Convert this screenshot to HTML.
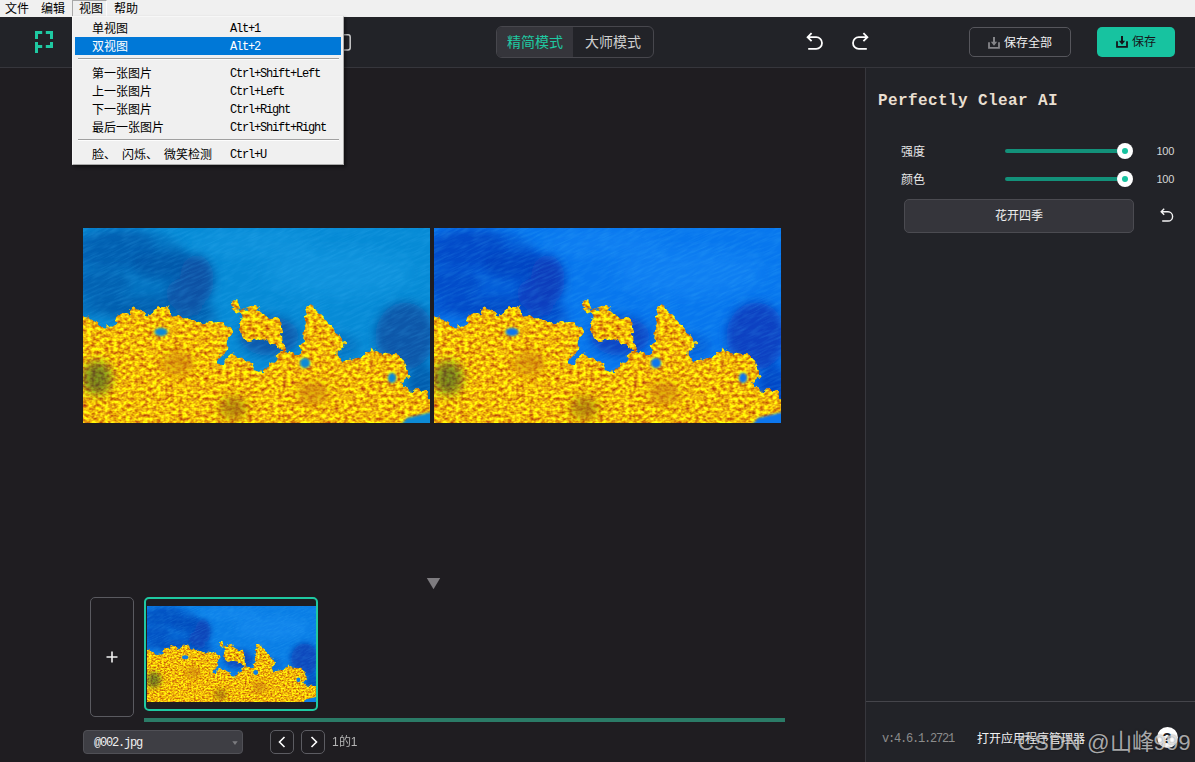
<!DOCTYPE html>
<html lang="zh-CN">
<head>
<meta charset="utf-8">
<title>Perfectly Clear</title>
<style>
*{box-sizing:border-box;margin:0;padding:0}
html,body{width:1195px;height:762px;overflow:hidden;background:#1f1d21}
body{position:relative;font-family:"Liberation Sans",sans-serif;font-size:12px;color:#e6e6e6}
.abs{position:absolute}
.mono{font-family:"Liberation Mono",monospace}
/* ---------- menubar ---------- */
#menubar{position:absolute;left:0;top:0;width:1195px;height:17px;background:#f0f0f0;color:#000}
#menubar span{position:absolute;top:0;height:16px;line-height:18px;font-size:12px;white-space:nowrap}
#menubar .sel{left:72px;width:35px;height:16px;background:#efefef;border:1px solid #a8a8a8;border-right-color:#fbfbfb;border-bottom:none}
/* ---------- toolbar ---------- */
#toolbar{position:absolute;left:0;top:17px;width:1195px;height:51px;background:#222328;border-bottom:1px solid #36363c}
#mode{position:absolute;left:496px;top:9px;width:158px;height:32px;border:1px solid #47474d;border-radius:6px;overflow:hidden}
#mode .on{position:absolute;left:0;top:0;width:76px;height:30px;background:#35353b}
#mode span{position:absolute;top:0;height:30px;line-height:30px;font-size:14px;white-space:nowrap}
.btn{position:absolute;top:10px;height:30px;border-radius:5px;line-height:28px;font-size:12px;white-space:nowrap}
#saveall{left:969px;width:102px;border:1px solid #56565c;color:#f0f0f0}
#save{left:1097px;width:78px;background:#17c3a0;color:#15151a}
/* ---------- main ---------- */
#canvas{position:absolute;left:0;top:68px;width:865px;height:694px;background:#1f1d21}
#panel{position:absolute;left:865px;top:68px;width:330px;height:694px;background:#222328;border-left:1px solid #37373d}
#panel .foot{position:absolute;left:0;top:633px;width:330px;height:1px;background:#45454b}
.photo{position:absolute;display:block}
/* ---------- popup menu ---------- */
#popup{position:absolute;left:72px;top:16px;width:272px;height:149px;background:#f0f0f0;border:1px solid #f7f7f7;border-right-color:#a9a9a9;border-bottom-color:#a9a9a9;color:#000;box-shadow:2px 2px 3px rgba(0,0,0,.45)}
#popup .it{position:absolute;left:2px;width:266px;height:18px;line-height:18px;font-size:12px;white-space:nowrap}
#popup .it b{position:absolute;left:17px;top:.5px;font-weight:normal}
#popup .it i{position:absolute;left:155px;top:.5px;font-style:normal;font-family:"Liberation Mono",monospace;font-size:12px;letter-spacing:-1.2px}
#popup .hl{background:#0078d7;color:#fff}
#popup .sep{position:absolute;left:5px;width:261px;height:1px;background:#a0a0a0;box-shadow:0 1px 0 #fdfdfd}

/* ---------- panel widgets ---------- */
#title{position:absolute;left:12px;top:22px;font-family:"Liberation Mono",monospace;font-weight:bold;font-size:16px;letter-spacing:.4px;line-height:22px;color:#e9dfd0;white-space:nowrap}
.lbl{position:absolute;left:35px;margin-top:1px;font-size:12px;line-height:16px;color:#e8e8e8;white-space:nowrap}
.track{position:absolute;left:139px;width:120px;height:4px;border-radius:2px;background:#13917a}
.knob{position:absolute;left:251px;width:16px;height:16px;border-radius:50%;background:#fff}
.knob::after{content:"";position:absolute;left:5px;top:5px;width:6px;height:6px;border-radius:50%;background:#17c3a0}
.val{position:absolute;left:290.5px;font-size:11px;line-height:16px;color:#d6d6d6;letter-spacing:-.3px}
#preset{position:absolute;left:38px;top:131px;width:230px;height:34px;background:#35353b;border:1px solid #4b4b51;border-radius:5px;text-align:center;line-height:32px;font-size:12px;color:#f0f0f0}
#ver{position:absolute;left:16px;top:663px;font-family:"Liberation Mono",monospace;font-size:12px;letter-spacing:-1.2px;line-height:16px;color:#8c8c8c;white-space:nowrap}
#appmgr{position:absolute;left:111px;top:663px;font-size:12px;line-height:16px;color:#f2f2f2;white-space:nowrap}
#help{position:absolute;left:290.5px;top:658.5px;width:21px;height:21px;border-radius:50%;background:#fff;color:#222227;font-weight:bold;font-size:15px;line-height:21px;text-align:center}
#wm{position:absolute;left:1018px;top:728.5px;font-size:22.2px;line-height:28px;color:rgba(255,255,255,.64);white-space:nowrap;text-shadow:0 0 2px rgba(0,0,0,.55);letter-spacing:0}
/* ---------- filmstrip ---------- */
#add{position:absolute;left:90px;top:529px;width:44px;height:120px;border:1px solid #5a5a60;border-radius:5px}
#thumb{position:absolute;left:144px;top:529px;width:174px;height:114px;border:2px solid #1fc9a2;border-radius:5px;background:#1f1d21;overflow:hidden}
#scroll{position:absolute;left:144px;top:650px;width:641px;height:4px;background:#2b7b67}
#file{position:absolute;left:83px;top:662px;width:160px;height:24px;background:#3e3e44;border:1px solid #505056;border-radius:4px}
#file span{position:absolute;left:10px;top:3.5px;font-family:"Liberation Mono",monospace;font-size:12px;letter-spacing:-1.2px;line-height:16px;color:#f0f0f0}
.nav{position:absolute;top:662px;width:24px;height:24px;border:1px solid #5c5c62;border-radius:5px}
#count{position:absolute;left:332px;top:666px;font-size:12px;line-height:16px;color:#b4b4b4;white-space:nowrap}
</style>
</head>
<body>

<!-- ================= photo artwork (vector approximation) ================= -->
<svg width="0" height="0" style="position:absolute" aria-hidden="true">
  <defs>
    <filter id="fBlur8" x="-30%" y="-30%" width="160%" height="160%"><feGaussianBlur stdDeviation="8"/></filter>
    <filter id="fBlur5" x="-30%" y="-30%" width="160%" height="160%"><feGaussianBlur stdDeviation="5"/></filter>
    <filter id="fBlur1" x="-30%" y="-30%" width="160%" height="160%"><feGaussianBlur stdDeviation="1.1"/></filter>
    <filter id="fBlur3" x="-30%" y="-30%" width="160%" height="160%"><feGaussianBlur stdDeviation="3"/></filter>
    <filter id="fWave" color-interpolation-filters="sRGB" x="0" y="0" width="100%" height="100%">
      <feTurbulence type="fractalNoise" baseFrequency="0.07 0.45" numOctaves="2" seed="5"/>
      <feColorMatrix type="matrix" values="0 0 0 0 0.25  0 0 0 0 0.72  0 0 0 0 0.98  2.2 0 0 0 -0.85"/>
    </filter>
    <filter id="fFlower" color-interpolation-filters="sRGB" x="-10%" y="-10%" width="120%" height="120%">
      <feTurbulence type="fractalNoise" baseFrequency="0.16" numOctaves="2" seed="3" result="n1"/>
      <feDisplacementMap in="SourceGraphic" in2="n1" scale="9" xChannelSelector="R" yChannelSelector="G" result="shape"/>
      <feTurbulence type="fractalNoise" baseFrequency="0.23 0.3" numOctaves="2" seed="11" result="n2"/>
      <feColorMatrix in="n2" type="matrix" values="0.6 0 0 0 0.64  1.3 0 0 0 0.07  0 0.12 0 0 -0.02  0 0 0 0 1" result="tex"/>
      <feComposite in="tex" in2="shape" operator="in"/>
    </filter>
    <clipPath id="cpPhoto"><rect x="0" y="0" width="347" height="195"/></clipPath>
    <symbol id="photo" viewBox="0 0 347 195" preserveAspectRatio="none">
      <g clip-path="url(#cpPhoto)">
        <rect x="0" y="0" width="347" height="195" style="fill:var(--sea,#0b8cd4)"/>
        <!-- dark water patches -->
        <g style="fill:var(--deep,#0a55a0)" filter="url(#fBlur5)">
          <ellipse cx="48" cy="44" rx="62" ry="44" opacity=".42"/>
          <ellipse cx="114" cy="52" rx="17" ry="25" opacity="1"/>
          <ellipse cx="103" cy="66" rx="20" ry="17" opacity=".85"/>
          <ellipse cx="84" cy="37" rx="36" ry="14" opacity=".75"/>
          <ellipse cx="30" cy="20" rx="42" ry="20" opacity=".55"/>
          <ellipse cx="18" cy="56" rx="30" ry="14" opacity=".5"/>
          <ellipse cx="60" cy="80" rx="72" ry="11" opacity=".6"/>
          <ellipse cx="112" cy="90" rx="22" ry="10" opacity=".6"/>
          <ellipse cx="186" cy="108" rx="30" ry="20" opacity=".85"/>
          <ellipse cx="322" cy="108" rx="30" ry="34" opacity=".9"/>
          <ellipse cx="340" cy="160" rx="16" ry="22" opacity=".8"/>
          <ellipse cx="252" cy="118" rx="24" ry="12" opacity=".4"/>
        </g>
        <!-- light water -->
        <g style="fill:var(--lite,#1a9fe6)" filter="url(#fBlur8)" opacity=".4">
          <ellipse cx="255" cy="45" rx="75" ry="24"/>
          <ellipse cx="170" cy="16" rx="60" ry="12"/>
        </g>
        <!-- ripples -->
        <g transform="rotate(-24 173 97)"><rect x="-80" y="-120" width="520" height="440" filter="url(#fWave)" opacity=".22"/></g>
        <!-- foliage -->
        <ellipse cx="14" cy="150" rx="20" ry="20" fill="#1d4a2a" filter="url(#fBlur3)"/>
        <!-- flowers -->
        <path filter="url(#fFlower)" fill="#f2b90c" d="M-4.0,87.0C-2.2,87.2 3.7,86.7 6.5,88.0C9.3,89.3 10.6,92.7 13.0,94.6C15.4,96.5 17.8,99.1 21.0,99.4C24.2,99.7 30.0,98.4 32.3,96.2C34.6,94.0 32.6,88.4 34.7,86.5C36.9,84.6 42.9,86.1 45.2,84.9C47.5,83.7 46.8,79.8 48.4,79.3C50.0,78.8 52.2,80.4 54.9,81.7C57.6,83.0 61.9,87.0 64.6,87.3C67.3,87.6 69.1,84.8 71.0,83.3C72.9,81.8 73.8,79.2 75.9,78.5C78.1,77.8 81.5,78.0 83.9,79.3C86.3,80.6 88.0,84.5 90.4,86.5C92.8,88.5 95.8,90.7 98.5,91.4C101.2,92.1 104.1,90.3 106.5,90.6C108.9,90.9 110.3,92.3 113.0,93.0C115.7,93.7 118.7,94.3 122.7,94.6C126.7,94.9 133.7,93.9 137.2,94.6C140.7,95.3 141.6,97.7 143.7,99.0C145.8,100.3 149.7,100.5 150.0,102.7C150.3,104.9 146.3,109.2 145.3,112.4C144.3,115.6 145.2,119.4 144.0,122.0C142.8,124.6 139.8,126.0 138.0,128.0C136.2,130.0 132.7,132.8 133.0,134.0C133.3,135.2 137.3,137.0 139.7,135.5C142.1,134.0 145.0,126.1 147.6,125.0C150.2,123.9 152.3,127.5 155.4,129.0C158.5,130.5 162.7,131.6 166.0,134.0C169.3,136.4 171.9,142.3 175.0,143.4C178.1,144.5 182.5,142.4 184.3,140.8C186.1,139.2 184.1,135.3 185.6,134.0C187.1,132.7 191.8,134.7 193.5,133.0C195.2,131.3 195.1,126.2 196.0,124.0C196.9,121.8 200.1,121.2 198.8,119.8C197.5,118.4 191.7,117.3 188.0,115.8C184.3,114.3 180.2,111.1 176.5,110.6C172.8,110.1 168.8,113.4 166.0,113.0C163.2,112.6 160.7,110.5 159.4,108.0C158.1,105.5 158.2,101.3 158.0,98.0C157.8,94.7 159.3,90.7 158.0,88.0C156.7,85.3 151.9,84.2 150.0,82.0C148.1,79.8 145.6,76.4 146.3,75.0C147.0,73.6 152.2,72.5 154.0,73.8C155.8,75.1 155.1,82.0 156.8,83.0C158.5,84.0 161.4,81.0 164.0,80.0C166.6,79.0 170.2,76.3 172.5,77.0C174.8,77.7 174.7,82.0 177.8,84.3C180.9,86.6 187.9,89.6 190.9,90.9C193.9,92.2 194.7,89.8 196.0,92.0C197.3,94.2 198.1,100.2 198.8,104.0C199.5,107.8 199.0,111.2 200.0,114.5C201.0,117.8 203.0,121.8 205.0,123.7C207.0,125.6 210.0,125.8 212.0,126.0C214.0,126.2 215.9,125.4 217.0,125.0C218.1,124.6 218.7,125.0 218.5,123.7C218.3,122.4 215.6,118.8 215.8,117.0C216.0,115.2 218.9,115.7 219.8,113.0C220.7,110.3 220.3,105.2 221.0,101.0C221.7,96.8 223.5,91.9 223.7,88.0C223.9,84.1 221.5,79.3 222.4,77.8C223.3,76.3 226.3,77.5 229.0,79.0C231.7,80.5 235.1,83.1 238.6,86.5C242.1,89.9 246.4,95.2 249.9,99.4C253.4,103.7 257.8,108.7 259.6,112.0C261.5,115.3 261.8,116.8 261.0,119.0C260.2,121.2 254.9,122.7 254.7,125.0C254.5,127.3 257.7,131.9 259.6,133.0C261.5,134.1 263.6,132.2 266.0,131.7C268.4,131.2 270.8,131.3 274.0,130.0C277.2,128.7 282.7,125.5 285.4,123.6C288.1,121.7 288.1,118.6 290.0,118.8C291.9,119.0 292.4,123.4 296.7,125.0C301.0,126.6 311.4,126.0 316.0,128.5C320.6,131.0 322.4,136.6 324.0,139.8C325.6,143.0 326.5,145.2 325.7,147.9C324.9,150.6 318.4,153.7 319.0,156.0C319.6,158.3 325.2,161.0 329.0,162.0C332.8,163.0 338.9,160.8 341.9,162.0C344.8,163.2 345.0,165.4 346.7,168.9C348.4,172.4 351.1,180.7 352.0,183.0L362,183V212H-14V87Z"/>
        <g filter="url(#fBlur1)" style="fill:var(--sea,#078bd6)">
          <ellipse cx="78" cy="104" rx="6.5" ry="4"/>
          <ellipse cx="222" cy="135" rx="5" ry="5"/>
          <ellipse cx="309" cy="150" rx="4" ry="5"/>
          <path d="M324,190L349,184V197H318Z"/>
        </g>
        <g filter="url(#fBlur5)" opacity=".55">
          <ellipse cx="14" cy="150" rx="15" ry="17" fill="#1d4a2a"/>
          <ellipse cx="150" cy="180" rx="14" ry="12" fill="#8a5a08"/>
          <ellipse cx="95" cy="135" rx="16" ry="12" fill="#c87808"/>
          <ellipse cx="230" cy="165" rx="16" ry="12" fill="#c87808"/>
        </g>
      </g>
    </symbol>
  </defs>
</svg>

<!-- ================= canvas ================= -->
<div id="canvas">
  <svg class="photo" style="left:83px;top:160px;--sea:#078bd6;--deep:#0851a4;--lite:#1a9fe6" width="347" height="195"><use href="#photo" width="347" height="195"/></svg>
  <svg class="photo" style="left:434px;top:160px;--sea:#0877ee;--deep:#083cbc;--lite:#1a8cf8" width="347" height="195"><use href="#photo" width="347" height="195"/></svg>
  <svg class="abs" style="left:426px;top:509px" width="15" height="13"><path d="M0.8,1 L14.2,1 L7.5,12.2 Z" fill="#7e7c80"/></svg>
  <div id="add"><svg class="abs" style="left:15px;top:53px" width="12" height="12"><path d="M6,0.5V11.5M0.5,6H11.5" stroke="#f2f2f2" stroke-width="1.6" fill="none"/></svg></div>
  <div id="thumb"><svg class="photo" style="left:1px;top:7px;--sea:#0a7ee6;--deep:#0844b8;--lite:#1a90f4" width="170" height="96"><use href="#photo" width="170" height="96"/></svg></div>
  <div id="scroll"></div>
  <div id="file"><span>@002.jpg</span><svg class="abs" style="left:148px;top:10px" width="6" height="4"><path d="M0.3,0.3H5.7L3,3.9Z" fill="#7c7c80"/></svg></div>
  <div class="nav" style="left:270px"><svg class="abs" style="left:7px;top:5px" width="8" height="12"><path d="M6.5,1 L1.5,6 L6.5,11" stroke="#fff" stroke-width="1.6" fill="none"/></svg></div>
  <div class="nav" style="left:301px"><svg class="abs" style="left:8px;top:5px" width="8" height="12"><path d="M1.5,1 L6.5,6 L1.5,11" stroke="#fff" stroke-width="1.6" fill="none"/></svg></div>
  <div id="count">1的1</div>
</div>

<!-- ================= right panel ================= -->
<div id="panel">
  <div id="title">Perfectly Clear AI</div>
  <div class="lbl" style="top:75px">强度</div>
  <div class="track" style="top:81px"></div><div class="knob" style="top:75px"></div>
  <div class="val" style="top:75px">100</div>
  <div class="lbl" style="top:103px">颜色</div>
  <div class="track" style="top:109px"></div><div class="knob" style="top:103px"></div>
  <div class="val" style="top:103px">100</div>
  <div id="preset">花开四季</div>
  <svg class="abs" style="left:293.5px;top:140px" width="14" height="15"><path d="M4.2,0.8 L1.2,3.8 L4.2,6.8 M1.4,3.8 H8 A4.6,4.6 0 0 1 8,13 H2.2" stroke="#f4f4f4" stroke-width="1.4" fill="none"/></svg>
  <div class="foot"></div>
  <div id="ver">v:4.6.1.2721</div>
  <div id="appmgr">打开应用程序管理器</div>
  <div id="help">?</div>
</div>

<!-- ================= toolbar ================= -->
<div id="toolbar">
  <svg class="abs" style="left:35px;top:14px" width="18" height="23"><path d="M7.2,1.5H1.5V8 M10.8,1.5H16.5V8 M16.5,11V15.5H10.8 M1.5,11V22 M1.5,15.5H7.2" stroke="#1fc9a2" stroke-width="3" fill="none"/></svg>
  <svg class="abs" style="left:344px;top:17px" width="8" height="17"><path d="M0,0.8H4A2.2,2.2 0 0 1 6.2,3V13.8A2.2,2.2 0 0 1 4,16H0" stroke="#c9c9c9" stroke-width="1.5" fill="none"/></svg>
  <svg class="abs" style="left:806px;top:15px" width="18" height="19"><path d="M5.6,1.2 L1.6,5.2 L5.6,9.2 M1.8,5.2 H10.2 A5.8,5.8 0 0 1 10.2,16.8 H2.2" stroke="#fff" stroke-width="1.8" fill="none"/></svg>
  <svg class="abs" style="left:851px;top:15px" width="18" height="19"><path d="M12.4,1.2 L16.4,5.2 L12.4,9.2 M16.2,5.2 H7.8 A5.8,5.8 0 0 0 7.8,16.8 H15.8" stroke="#fff" stroke-width="1.8" fill="none"/></svg>
  <div id="mode">
    <div class="on"></div>
    <span style="left:10px;color:#1fc9a2">精简模式</span>
    <span style="left:88px;color:#cfcfcf">大师模式</span>
  </div>
  <div id="saveall" class="btn"><svg class="abs" style="left:18px;top:8.5px" width="12" height="12"><path d="M6,0V6" stroke="#858589" stroke-width="2" fill="none"/><path d="M2.8,4.8H9.2L6,8.8Z" fill="#858589"/><path d="M1,5.2V10.8H11V5.2" stroke="#858589" stroke-width="1.8" fill="none"/></svg><span class="abs" style="left:34px;top:.5px">保存全部</span></div>
  <div id="save" class="btn"><svg class="abs" style="left:19px;top:8.5px" width="12" height="12"><path d="M6,0V6" stroke="#15151a" stroke-width="2" fill="none"/><path d="M2.8,4.8H9.2L6,8.8Z" fill="#15151a"/><path d="M1,5.2V10.8H11V5.2" stroke="#15151a" stroke-width="1.8" fill="none"/></svg><span class="abs" style="left:35px;top:.5px">保存</span></div>
</div>

<div id="wm">CSDN @山峰999</div>

<!-- ================= menubar ================= -->
<div id="menubar">
  <span class="sel"></span>
  <span style="left:5px">文件</span>
  <span style="left:41px">编辑</span>
  <span style="left:79px">视图</span>
  <span style="left:114px">帮助</span>
</div>

<!-- ================= popup menu ================= -->
<div id="popup">
  <div class="it" style="top:2px"><b>单视图</b><i>Alt+1</i></div>
  <div class="it hl" style="top:20px"><b>双视图</b><i>Alt+2</i></div>
  <div class="sep" style="top:41px"></div>
  <div class="it" style="top:47px"><b>第一张图片</b><i>Ctrl+Shift+Left</i></div>
  <div class="it" style="top:65px"><b>上一张图片</b><i>Ctrl+Left</i></div>
  <div class="it" style="top:83px"><b>下一张图片</b><i>Ctrl+Right</i></div>
  <div class="it" style="top:101px"><b>最后一张图片</b><i>Ctrl+Shift+Right</i></div>
  <div class="sep" style="top:122px"></div>
  <div class="it" style="top:128px"><b style="word-spacing:2.7px">脸、 闪烁、 微笑检测</b><i>Ctrl+U</i></div>
</div>

</body>
</html>
